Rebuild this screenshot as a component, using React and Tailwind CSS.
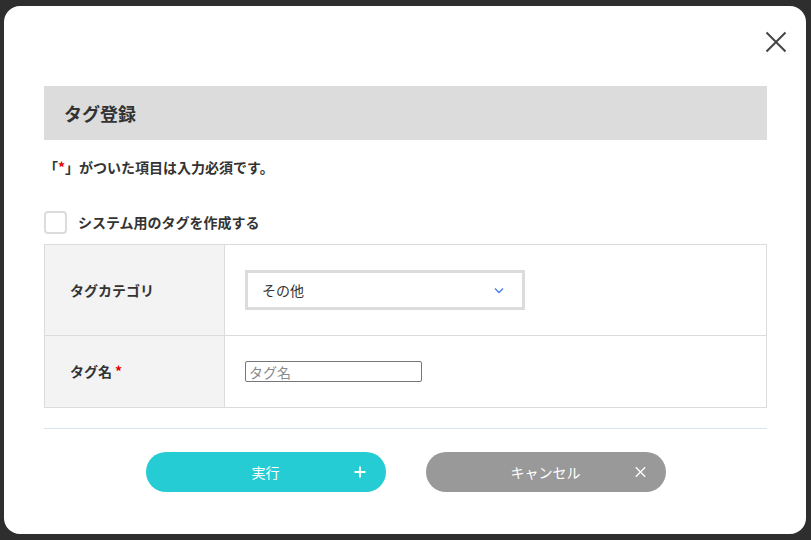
import React, { useState } from "react"

const font = { fontFamily: '"Noto Sans CJK JP", "Noto Sans", sans-serif' }

function Chevron() {
  return (
    <svg width="10" height="7" viewBox="0 0 10 7" fill="none">
      <path d="M1 1.5 L5 5.5 L9 1.5" stroke="#4a7de6" strokeWidth="1.4" />
    </svg>
  )
}

export default function App() {
  const [system, setSystem] = useState(false)
  const [name, setName] = useState("")

  return (
    <div className="h-[540px] w-[811px] bg-[#2e2e2e] pt-[6px] pl-[4px] text-[#333]" style={font}>
      <div className="relative h-[528px] w-[802px] rounded-[16px] bg-white pl-[40px] pr-[39px] pt-[80px]">
        {/* close */}
        <button className="absolute right-[18px] top-[24px] flex h-[24px] w-[24px] items-center justify-center">
          <svg width="22" height="22" viewBox="0 0 22 22">
            <path d="M1.5 1.5 L20.5 20.5 M20.5 1.5 L1.5 20.5" stroke="#444" strokeWidth="2" />
          </svg>
        </button>

        <div className="flex h-[54px] items-center bg-[#dcdcdc] px-[20px]">
          <h2 className="text-[18px] font-bold text-[#333]">タグ登録</h2>
        </div>

        <p className="mt-[17px] text-[14px] font-bold leading-[20px]">
          「<span className="text-[#e60000]">*</span>」がついた項目は入力必須です。
        </p>

        <label className="mt-[34px] flex cursor-pointer items-center gap-[11px]">
          <input
            type="checkbox"
            checked={system}
            onChange={(e) => setSystem(e.target.checked)}
            className="peer sr-only"
          />
          <span className="h-[23px] w-[23px] rounded-[4px] border-2 border-[#dcdcdc] bg-white" />
          <span className="text-[14px] font-bold">システム用のタグを作成する</span>
        </label>

        <div className="mt-[10px] border border-[#dcdcdc]">
          <div className="flex h-[91px] border-b border-[#dcdcdc]">
            <div className="flex w-[180px] shrink-0 items-center border-r border-[#dcdcdc] bg-[#f3f3f3] pl-[25px] text-[14px] font-bold">
              タグカテゴリ
            </div>
            <div className="flex items-center pl-[20px]">
              <div className="flex h-[40px] w-[280px] items-center justify-between border-[3px] border-[#dcdcdc] pl-[14px] pr-[18px] text-[14px]">
                <span>その他</span>
                <Chevron />
              </div>
            </div>
          </div>
          <div className="flex h-[71px]">
            <div className="flex w-[180px] shrink-0 items-center border-r border-[#dcdcdc] bg-[#f3f3f3] pl-[25px] text-[14px] font-bold">
              タグ名<span className="ml-[3px] text-[#e60000]">*</span>
            </div>
            <div className="flex items-center pl-[20px]">
              <input
                value={name}
                onChange={(e) => setName(e.target.value)}
                placeholder="タグ名"
                className="h-[21px] w-[177px] rounded-[2px] border border-[#767676] px-[3px] text-[14px] leading-[19px] placeholder:text-[#8a8a8a] focus:outline-none"
              />
            </div>
          </div>
        </div>

        <div className="mt-[20px] border-t border-[#d6e6ef]" />

        <div className="mt-[23px] flex justify-center gap-[40px]">
          <button className="relative flex h-[40px] w-[240px] items-center justify-center rounded-full bg-[#26ccd4] text-[14px] text-white">
            実行
            <span className="absolute right-[20px] top-1/2 -translate-y-1/2">
              <svg width="12" height="12" viewBox="0 0 12 12">
                <path d="M6 0.5 V11.5 M0.5 6 H11.5" stroke="#fff" strokeWidth="1.8" />
              </svg>
            </span>
          </button>
          <button className="relative flex h-[40px] w-[240px] items-center justify-center rounded-full bg-[#999] text-[14px] text-white">
            キャンセル
            <span className="absolute right-[20px] top-1/2 -translate-y-1/2">
              <svg width="11" height="11" viewBox="0 0 11 11">
                <path d="M0.8 0.8 L10.2 10.2 M10.2 0.8 L0.8 10.2" stroke="#fff" strokeWidth="1.3" />
              </svg>
            </span>
          </button>
        </div>
      </div>
    </div>
  )
}
